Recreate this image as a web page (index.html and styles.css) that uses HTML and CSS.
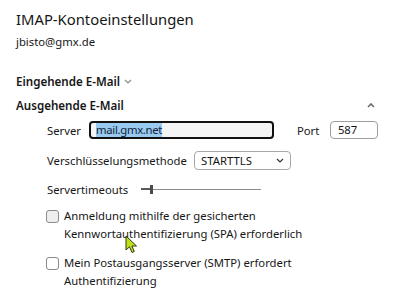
FILE: index.html
```html
<!DOCTYPE html>
<html lang="de">
<head>
    <meta charset="UTF-8">
    <title>IMAP-Kontoeinstellungen</title>
    <link rel="stylesheet" href="styles.css">
</head>
<body>
    <div class="panel">
        <h1 class="title">IMAP-Kontoeinstellungen</h1>
        <div class="account">jbisto@gmx.de</div>

        <div class="section-head incoming">
            <span>Eingehende E-Mail</span>
            <svg class="chev" width="8" height="5" viewBox="0 0 8 5"><path d="M1 1 L4 4 L7 1" fill="none" stroke="#8a8a8a" stroke-width="1.2"/></svg>
        </div>

        <div class="section-head outgoing">
            <span>Ausgehende E-Mail</span>
            <svg class="chev chev-up" width="8" height="5" viewBox="0 0 8 5"><path d="M1 4 L4 1 L7 4" fill="none" stroke="#6a6a6a" stroke-width="1.6"/></svg>
        </div>

        <div class="section-body">
            <div class="row row-server">
                <span class="label label-server">Server</span>
                <div class="textbox focused"><span class="selected">mail.gmx.net</span></div>
                <span class="label label-port">Port</span>
                <div class="textbox port">587</div>
            </div>

            <div class="row row-enc">
                <span class="label label-enc">Verschlüsselungsmethode</span>
                <div class="select">
                    <span>STARTTLS</span>
                    <svg width="8" height="5" viewBox="0 0 8 5"><path d="M1 1 L4 4 L7 1" fill="none" stroke="#333" stroke-width="1.2"/></svg>
                </div>
            </div>

            <div class="row row-timeout">
                <span class="label label-timeout">Servertimeouts</span>
                <div class="slider">
                    <div class="slider-fill"></div>
                    <div class="slider-thumb"></div>
                    <div class="slider-track"></div>
                </div>
            </div>

            <div class="check check-spa">
                <span class="box hover"></span>
                <span class="check-text">Anmeldung mithilfe der gesicherten Kennwortauthentifizierung (SPA) erforderlich</span>
            </div>

            <div class="check check-smtp">
                <span class="box"></span>
                <span class="check-text">Mein Postausgangsserver (SMTP) erfordert Authentifizierung</span>
            </div>
        </div>

        <svg class="cursor" width="14" height="20" viewBox="0 0 14 20">
            <path d="M1 1 L1 15 L4.5 11.8 L7 17.5 L9.3 16.5 L6.9 11 L11.5 11 Z" fill="#bfe01a" stroke="#2d3a10" stroke-width="1" stroke-linejoin="round"/>
        </svg>
    </div>
</body>
</html>
```

FILE: styles.css
```css
* {
    margin: 0;
    padding: 0;
    box-sizing: border-box;
}

body {
    font-family: 'Noto Sans', 'Open Sans', sans-serif;
    font-size: 11.3px;
    color: #161616;
    background: #ffffff;
}

.panel {
    position: relative;
    padding: 8px 26px 0 16px;
    height: 302px;
    overflow: hidden;
}

.title {
    font-size: 14.8px;
    font-weight: 400;
    line-height: 22px;
}

.account {
    margin-top: 3px;
    line-height: 18px;
}

.section-head {
    display: flex;
    align-items: center;
    height: 22px;
    font-size: 11.6px;
    font-weight: 600;
}

.incoming {
    margin-top: 19px;
}

.incoming .chev {
    margin-left: 4px;
    margin-top: 1px;
}

.outgoing {
    margin-top: 2px;
    justify-content: space-between;
}

.outgoing .chev-up {
    margin-right: 3px;
}

.section-body {
    padding-left: 31px;
}

.row {
    display: flex;
    align-items: center;
}

.label {
    flex: none;
}

.row-server {
    margin-top: 5px;
    height: 18px;
}

.label-server {
    width: 42px;
}

.textbox {
    height: 18px;
    border: 1px solid #9e9e9e;
    border-radius: 4px;
    background: #ffffff;
    display: flex;
    align-items: center;
    padding-left: 7px;
    line-height: 14px;
}

.textbox.focused {
    width: 189px;
    border: 2px solid #111111;
    background: #f4f4f4;
    padding-left: 5px;
}

.selected {
    background: #99c9ef;
    color: #10233a;
    letter-spacing: -0.3px;
}

.label-port {
    margin-left: 23px;
    width: 33px;
}

.textbox.port {
    width: 49px;
}

.row-enc {
    margin-top: 12px;
    height: 19px;
}

.label-enc {
    width: 147px;
}

.select {
    width: 97px;
    height: 19px;
    border: 1px solid #a8a8a8;
    border-radius: 4px;
    display: flex;
    align-items: center;
    justify-content: space-between;
    padding: 0 6px 0 6px;
}

.row-timeout {
    margin-top: 10px;
    height: 18px;
}

.label-timeout {
    width: 94px;
}

.slider {
    display: flex;
    align-items: center;
    width: 120px;
    height: 10px;
}

.slider-fill {
    width: 9px;
    height: 2px;
    background: #5a5a5a;
}

.slider-thumb {
    width: 3px;
    height: 9px;
    background: #4a4a4a;
}

.slider-track {
    flex: 1;
    height: 1px;
    background: #8c8c8c;
}

.check {
    display: flex;
    align-items: flex-start;
    line-height: 18px;
}

.check-spa {
    margin-top: 9px;
}

.check-smtp {
    margin-top: 11px;
}

.box {
    flex: none;
    width: 13px;
    height: 13px;
    margin-top: 3px;
    margin-right: 5px;
    margin-left: -1px;
    border: 1px solid #8a8a8a;
    border-radius: 3px;
    background: #ffffff;
}

.box.hover {
    background: #efefef;
}

.check-text {
    width: 250px;
}

/* mouse pointer over the first option */
.cursor {
    position: absolute;
    left: 125px;
    top: 235px;
}
```
